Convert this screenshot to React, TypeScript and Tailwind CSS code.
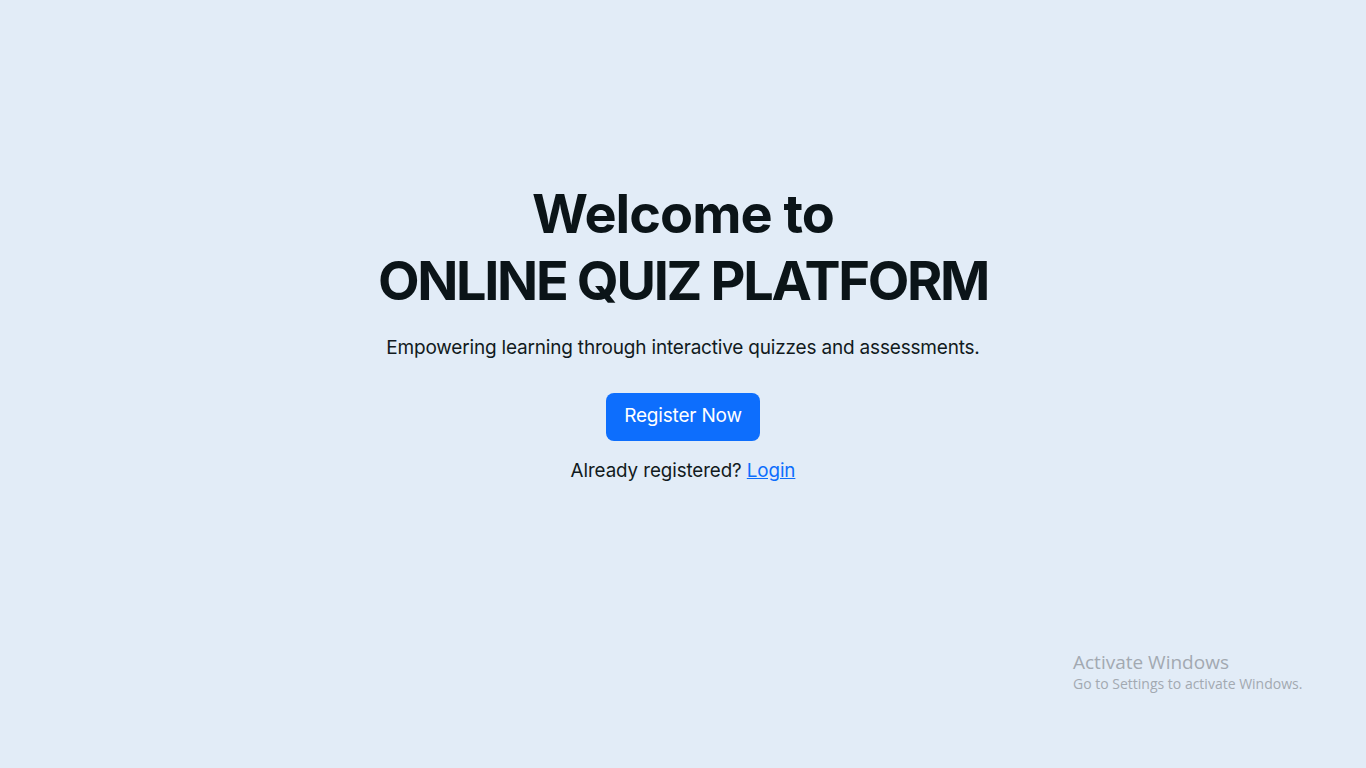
export default function App() {
  return (
    <div className="relative min-h-[768px] w-full bg-[#e2ecf7] overflow-hidden" style={{ fontFamily: 'Inter, "Noto Sans", sans-serif' }}>
      <div className="flex flex-col items-center pt-[180px] text-center">
        <h1 className="text-[54px] leading-[67px] font-bold text-[#0b1418]">
          <span className="tracking-[-0.018em]">Welcome to</span>
          <br />
          <span className="tracking-[-0.043em]">ONLINE QUIZ PLATFORM</span>
        </h1>
        <p className="mt-[20px] text-[19px] leading-[1.5] tracking-[-0.01em] text-[#111a20]">
          Empowering learning through interactive quizzes and assessments.
        </p>
        <button className="mt-[30px] h-[48px] px-[18px] rounded-[8px] bg-[#0d6efd] text-white text-[19px] tracking-[-0.01em]">
          Register Now
        </button>
        <p className="mt-[16px] text-[18.8px] leading-[1.5] tracking-[-0.005em] text-[#111a20]">
          Already registered? <a href="#" className="text-[#0d6efd] underline">Login</a>
        </p>
      </div>
      <div className="absolute left-[1073px] top-[650px] text-[#a2a9b1]" style={{ fontFamily: '"Open Sans", "Liberation Sans", sans-serif' }}>
        <div className="text-[19px] leading-[24px]">Activate Windows</div>
        <div className="text-[14px] leading-[20px]">Go to Settings to activate Windows.</div>
      </div>
    </div>
  );
}
